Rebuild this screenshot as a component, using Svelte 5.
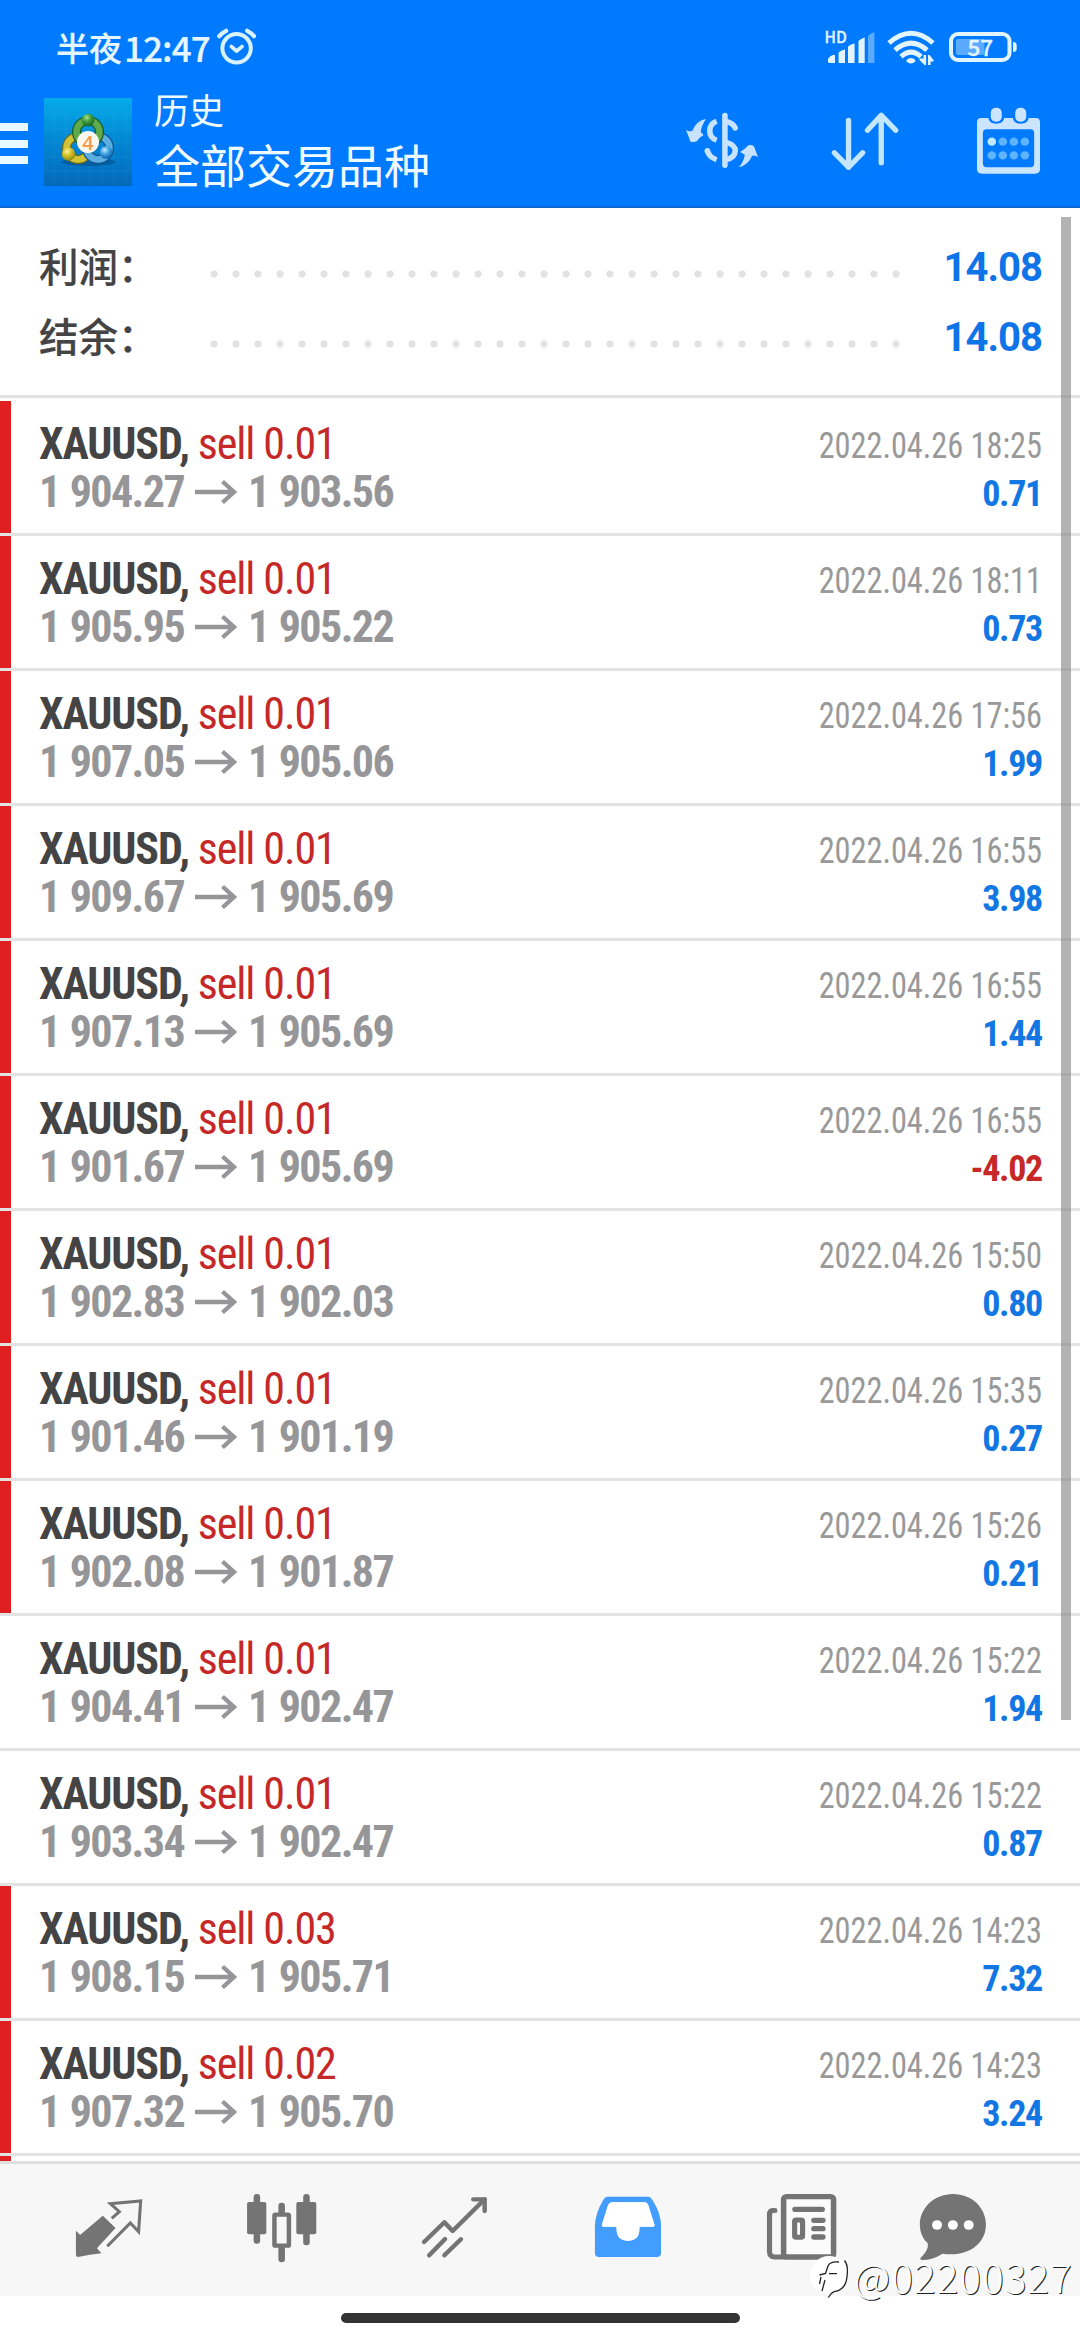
<script lang="ts">
  type Deal = {
    lots: string;
    open: string;
    close: string;
    time: string;
    profit: string;
    marked: boolean;
  };

  function deal(lots: string, open: string, close: string, time: string, profit: string, marked = true): Deal {
    return { lots, open: `1 ${open}`, close: `1 ${close}`, time: `2022.04.26 ${time}`, profit, marked };
  }

  const summary = [
    { label: '利润：', value: '14.08' },
    { label: '结余：', value: '14.08' }
  ];

  const deals: Deal[] = [
    deal('0.01', '904.27', '903.56', '18:25', '0.71'),
    deal('0.01', '905.95', '905.22', '18:11', '0.73'),
    deal('0.01', '907.05', '905.06', '17:56', '1.99'),
    deal('0.01', '909.67', '905.69', '16:55', '3.98'),
    deal('0.01', '907.13', '905.69', '16:55', '1.44'),
    deal('0.01', '901.67', '905.69', '16:55', '-4.02'),
    deal('0.01', '902.83', '902.03', '15:50', '0.80'),
    deal('0.01', '901.46', '901.19', '15:35', '0.27'),
    deal('0.01', '902.08', '901.87', '15:26', '0.21'),
    deal('0.01', '904.41', '902.47', '15:22', '1.94', false),
    deal('0.01', '903.34', '902.47', '15:22', '0.87', false),
    deal('0.03', '908.15', '905.71', '14:23', '7.32'),
    deal('0.02', '907.32', '905.70', '14:23', '3.24')
  ];
</script>

<div class="app">
  <header>
    <div class="status">
      <span class="clock">半夜<b>12:47</b></span>
      <svg class="alarm" viewBox="215 26 44 44">
        <g fill="none" stroke="#d9f2ff" stroke-linecap="round" stroke-linejoin="round">
          <circle cx="236.6" cy="48.3" r="14.2" stroke-width="4" />
          <path d="M231.4 46.6l5.2 4.4 5.4-4.4" stroke-width="3.8" />
          <path d="M219.3 36.2q2.8-3.4 6.8-5.4M254 36.2q-2.8-3.4-6.8-5.4" stroke-width="4.2" />
        </g>
      </svg>
      <svg class="system" viewBox="820 24 200 48" fill="#e2f5ff">
        <text x="824.5" y="43" class="hd">HD</text>
        <path d="M828 62v-3q2-3.500 5-4h2v8h-6zM838.600 63V52.500q3-2.500 6.400-3V63zM848 63V46.500q3-2.500 6.600-3V63zM858.500 63V41q3-3 6.200-3.500V63z" />
        <path d="M868 63V36q3-3 6.400-3.700V63z" opacity=".4" />
        <g fill="none" stroke="#e2f5ff" stroke-width="5">
          <path d="M889 43q22-19.500 44 0" />
          <path d="M895 50.200q16-14 32 0" />
          <path d="M901 56.700q10-9 20 0" />
        </g>
        <path d="M906.500 60q4.400-4 8.800 0v1.500q-4.400 4-8.800 0zM923.500 55h2.600v10h-1.600l-5-5v-1.500h4zM928 65V55h1.600l4 5v1.500h-3V65z" />
        <rect x="951" y="34" width="58.500" height="26" rx="7" fill="none" stroke="#e2f5ff" stroke-width="4" />
        <rect x="956" y="39" width="28.500" height="16" rx="2" opacity=".4" />
        <path d="M1013 42q3.700 0 3.700 3v4q0 3-3.700 3z" />
        <text x="967.500" y="56" class="charge">57</text>
      </svg>
    </div>

    <div class="toolbar">
      <div class="menu"><i></i><i></i><i></i></div>
      <svg class="logo" viewBox="0 0 88 88">
        <defs>
          <linearGradient id="sky" x1="0" y1="0" x2="0" y2="1">
            <stop offset="0" stop-color="#05abea" />
            <stop offset=".5" stop-color="#0386d3" />
            <stop offset="1" stop-color="#0468b8" />
          </linearGradient>
          <radialGradient id="green" cx=".4" cy=".3" r=".7">
            <stop offset="0" stop-color="#a8e08c" />
            <stop offset=".5" stop-color="#3f9a3b" />
            <stop offset="1" stop-color="#17682a" />
          </radialGradient>
          <radialGradient id="gold" cx=".4" cy=".3" r=".7">
            <stop offset="0" stop-color="#fff29a" />
            <stop offset=".5" stop-color="#d3be25" />
            <stop offset="1" stop-color="#8b8a10" />
          </radialGradient>
          <radialGradient id="azure" cx=".4" cy=".3" r=".7">
            <stop offset="0" stop-color="#bfe8ff" />
            <stop offset=".5" stop-color="#3f9fde" />
            <stop offset="1" stop-color="#0f63ac" />
          </radialGradient>
        </defs>
        <rect width="88" height="88" fill="url(#sky)" />
        <path d="M10 0V88M22 0V88M34 0V88M46 0V88M58 0V88M70 0V88M82 0V88M0 17H88M0 31H88M0 45H88M0 59H88M0 73H88" stroke="#5ec8ee" stroke-opacity=".14" stroke-width=".8" />
        <ellipse cx="44.500" cy="64" rx="27" ry="4" fill="#033f75" opacity=".45" />
        <g fill="none">
          <circle cx="34" cy="50" r="11.500" stroke="#6f6c14" stroke-width="9" />
          <circle cx="34" cy="50" r="11.500" stroke="#d2c236" stroke-width="6.500" />
          <circle cx="54" cy="50" r="11.500" stroke="#0f548f" stroke-width="9" />
          <circle cx="54" cy="50" r="11.500" stroke="#5aaee2" stroke-width="6.500" />
          <circle cx="44" cy="34" r="11.500" stroke="#185c27" stroke-width="9" />
          <circle cx="44" cy="34" r="11.500" stroke="#5fab49" stroke-width="6.500" />
        </g>
        <circle cx="44" cy="22" r="6.300" fill="url(#green)" />
        <circle cx="24.500" cy="56" r="6.700" fill="url(#gold)" />
        <circle cx="62" cy="54.500" r="6.300" fill="url(#azure)" />
        <circle cx="44" cy="44" r="11" fill="#fbf7ef" />
        <text x="44" y="51.500" class="four">4</text>
      </svg>
      <div class="titles">
        <span class="sub">历史</span>
        <span class="main">全部交易品种</span>
      </div>
      <div class="actions">
        <svg viewBox="418.200 318 220.700 210" preserveAspectRatio="none">
          <g fill="none" stroke="#c8e3ff" stroke-width="16">
            <path d="M537 346V496" stroke-linecap="round" />
            <path d="M513 364Q493 372 493 393Q493 414 513 421" />
            <path d="M541 364Q562 370 567 384" stroke-linecap="round" />
            <path d="M486 452Q491 472 513 479" />
            <path d="M486 452v1" stroke-linecap="round" />
            <path d="M541 427Q568 436 567 453Q566 472 541 479" />
          </g>
          <path d="M482 357Q468 378 467 396L475 405Q464 411 456 423Q448 427 437 425Q432 410 424 390Q433 396 442 393Q454 362 482 357zM577 502Q590 489 595 464L581 456Q594 449 605 436Q612 434 621 438Q626 452 633 471Q625 465 616 467Q606 494 577 502z" fill="#c8e3ff" />
        </svg>
        <svg viewBox="836.400 318 220.700 210" preserveAspectRatio="none">
          <path d="M896 361V502M855 458L896 502L937 458M991 488V346M951 391L991 346L1033 391" fill="none" stroke="#c5e6ff" stroke-width="15.500" stroke-linecap="round" stroke-linejoin="round" />
        </svg>
        <svg viewBox="1254.500 318 220.700 210" preserveAspectRatio="none">
          <path fill-rule="evenodd" d="M1282 354H1302Q1304 371 1325 371Q1346 371 1348 354H1373Q1375 371 1396 371Q1417 371 1419 354H1440Q1452 354 1452 367V507Q1452 521 1438 521H1283Q1269 521 1269 507V367Q1269 354 1282 354zM1297 388Q1286 388 1286 400V490Q1286 502 1297 502H1424Q1435 502 1435 490V400Q1435 388 1424 388z" fill="#cbe4ff" />
          <rect x="1309" y="323" width="32" height="42" rx="15" fill="#cbe4ff" />
          <rect x="1380" y="323" width="32" height="42" rx="15" fill="#cbe4ff" />
          <circle cx="1312" cy="425" r="12.500" fill="#c0ebff" />
          {#each [1344, 1376, 1408] as cx}
            <circle {cx} cy="425" r="12.500" fill="#5eb4ff" />
          {/each}
          {#each [1312, 1344, 1376, 1408] as cx}
            <circle {cx} cy="466" r="12.500" fill="#5eb4ff" />
          {/each}
        </svg>
      </div>
    </div>
  </header>

  <main>
    <section class="summary">
      {#each summary as row}
        <div class="total">
          <span class="label">{row.label}</span>
          <span class="dots"></span>
          <span class="value">{row.value}</span>
        </div>
      {/each}
    </section>

    <ul>
      {#each deals as d}
        <li class:marked={d.marked}>
          <div class="left">
            <div class="line"><strong>XAUUSD,</strong> <span class="sell">sell {d.lots}</span></div>
            <div class="price">
              <span>{d.open}</span>
              <svg viewBox="0 0 42 26"><path d="M0 13H38M27.500 2.500L39 13L27.500 23.500" /></svg>
              <span>{d.close}</span>
            </div>
          </div>
          <div class="right">
            <div class="time">{d.time}</div>
            <div class="profit" class:loss={d.profit.startsWith('-')}>{d.profit}</div>
          </div>
        </li>
      {/each}
      <li class="marked"></li>
    </ul>
    <div class="scrollbar"></div>
  </main>

  <nav>
    <span class="tab">
      <svg viewBox="198.900 264 232.300 240" preserveAspectRatio="none">
        <path d="M323 355L345 335L319 311L407 303L401 395L377 369L310 439" fill="none" stroke="#747474" stroke-width="9" />
        <path d="M297 347L334 384L280 445L293 460Q260 464 225 471Q219 470 219 464V392L231 405z" fill="#747474" />
      </svg>
    </span>
    <span class="tab">
      <svg viewBox="701.300 264 232.300 240" preserveAspectRatio="none" fill="#747474">
        <rect x="716" y="306" width="56" height="97" rx="6" />
        <rect x="735" y="282" width="19" height="149" rx="9" />
        <rect x="859" y="306" width="58" height="97" rx="6" />
        <rect x="879" y="282" width="19" height="154" rx="9" />
        <rect x="807" y="308" width="19" height="40" rx="9" />
        <rect x="807" y="435" width="19" height="52" rx="9" />
        <rect x="795.500" y="344" width="42" height="93" rx="3" fill="#f7f7f7" stroke="#747474" stroke-width="13" />
      </svg>
    </span>
    <span class="tab">
      <svg viewBox="1203.700 264 232.300 240" preserveAspectRatio="none">
        <path d="M1230 426L1289 367L1313 393L1406 298M1245 466L1291 417M1289 466L1337 418" fill="none" stroke="#747474" stroke-width="13" stroke-linecap="round" stroke-linejoin="round" />
        <path d="M1373 298H1406V333" fill="none" stroke="#747474" stroke-width="13" stroke-linecap="round" stroke-linejoin="round" />
      </svg>
    </span>
    <span class="tab">
      <svg viewBox="137.900 264 232.300 240" preserveAspectRatio="none">
        <path fill-rule="evenodd" d="M194 290H313Q320 290 325 300Q350 340 350 378V459Q350 471 338 471H170Q158 471 158 459V378Q159 340 182 300Q187 290 194 290zM207 307Q200 307 196 316L178 375Q177 380 184 380H219Q222 380 221 388Q221 422 254 422Q287 422 287 388Q286 380 289 380H326Q332 380 331 375L313 316Q310 307 303 307z" fill="#429dff" />
        <path d="M184 380H219Q222 380 221 388Q221 422 254 422Q287 422 287 388Q286 380 289 380H326Q332 380 331 375L313 316Q310 307 303 307H207Q200 307 196 316L178 375Q177 380 184 380z" fill="#fff" />
      </svg>
    </span>
    <span class="tab">
      <svg viewBox="640.300 264 232.300 240" preserveAspectRatio="none" fill="none" stroke="#747474">
        <path d="M678 331Q665 331 665 344V454Q665 471 680 471H712" stroke-width="15" />
        <path d="M681 331v1" stroke-width="14" stroke-linecap="round" />
        <rect x="706" y="290" width="145" height="181" rx="8" fill="#fbfbfb" stroke-width="16" />
        <path d="M739 328H818M794 361H820M794 386H820M794 411H820" stroke-width="16" stroke-linecap="round" />
        <rect x="738" y="360" width="23" height="52" rx="4" stroke-width="15" />
      </svg>
    </span>
    <span class="tab">
      <svg viewBox="1083.200 264 232.300 240" preserveAspectRatio="none">
        <path d="M1199 282C1255 282 1295 324 1295 374C1295 430 1243 473 1169 461Q1140 480 1111 480Q1103 480 1105 474Q1130 450 1126 430Q1103 408 1103 374C1103 324 1145 282 1199 282z" fill="#747474" />
        <circle cx="1153" cy="375" r="14.500" fill="#fff" />
        <circle cx="1199" cy="375" r="14.500" fill="#fff" />
        <circle cx="1245" cy="375" r="14.500" fill="#fff" />
      </svg>
    </span>
  </nav>

  <footer><span class="home"></span></footer>

  <div class="watermark">
    <svg viewBox="0 0 42 46">
      <circle cx="19" cy="19" r="19" fill="#fff" />
      <path d="M29 6Q20 5 18 10L15.500 17.500L9.500 19M11 21L9.500 28M12 35L15 24M19 17.700H27M34.500 4.500Q38 9 37.300 17Q37 26 34 30Q30 35 24 35.700Q21 37 18.300 41.500" fill="none" stroke="#222" stroke-width="1.300" />
    </svg>
    <span>@02200327</span>
  </div>
</div>

<style>
  :global(body) {
    background: #fff;
  }

  .app {
    position: relative;
    display: flex;
    flex-direction: column;
    width: 1080px;
    height: 2340px;
    overflow: hidden;
    background: #fff;
    font-family: Roboto, 'Noto Sans CJK SC', sans-serif;
  }

  svg {
    display: block;
    flex: none;
  }

  header {
    box-sizing: border-box;
    height: 208px;
    background: #007aff;
    border-bottom: 2px solid #0d67cd;
  }

  .status {
    display: flex;
    align-items: center;
    box-sizing: border-box;
    height: 80px;
    padding: 16px 60px 0 56px;
  }

  .clock {
    display: flex;
    align-items: center;
    width: 155px;
    padding-bottom: 3px;
    font: 500 33px/40px 'Noto Sans CJK SC', sans-serif;
    color: #e6f6ff;
    white-space: nowrap;
    -webkit-text-stroke: 0.2px #e6f6ff;
  }

  .clock b {
    margin-left: 2px;
    font-size: 35px;
    font-weight: 500;
    letter-spacing: -0.9px;
  }

  .alarm {
    width: 44px;
    height: 44px;
    margin-left: 4px;
  }

  .system {
    width: 200px;
    height: 48px;
    margin-left: auto;
  }

  .hd {
    font: 500 15.5px 'Noto Sans CJK SC', sans-serif;
    stroke: #e2f5ff;
    stroke-width: 0.3px;
  }

  .charge {
    font: 500 22.5px 'Noto Sans CJK SC', sans-serif;
    stroke: #e2f5ff;
    stroke-width: 0.3px;
  }

  .toolbar {
    display: flex;
    align-items: flex-start;
    padding-right: 32px;
  }

  .menu {
    display: grid;
    gap: 8.5px;
    width: 27.5px;
    margin-top: 43px;
  }

  .menu i {
    height: 8px;
    background: #e8faff;
  }

  .logo {
    width: 88px;
    height: 88px;
    margin: 18px 0 0 16.5px;
  }

  .four {
    font: 600 20px 'Open Sans', sans-serif;
    fill: #f39a4e;
    text-anchor: middle;
  }

  .titles {
    display: flex;
    flex-direction: column;
    margin: 7px 0 0 22px;
    color: #f0fbff;
    font-family: 'Noto Sans CJK SC', sans-serif;
  }

  .sub {
    font-size: 35px;
    line-height: 44px;
  }

  .main {
    font-size: 46px;
    line-height: 64px;
  }

  .actions {
    display: flex;
    gap: 68px;
    margin: 26px 0 0 auto;
  }

  .actions svg {
    width: 76px;
    height: 70px;
  }

  main {
    position: relative;
    height: 1953px;
    overflow: hidden;
  }

  .summary {
    box-sizing: border-box;
    height: 190px;
    padding: 24px 38px 0 39px;
    border-bottom: 3px solid #e3e3e3;
  }

  .total {
    display: flex;
    align-items: center;
    height: 70px;
  }

  .label {
    width: 160px;
    padding-bottom: 5px;
    font: 500 39.5px/65px 'Noto Sans CJK SC', sans-serif;
    color: #444;
    -webkit-text-stroke: 0.2px #444;
  }

  .dots {
    width: 704px;
    height: 8px;
    margin: 14px 0 0 3.5px;
    background: radial-gradient(circle at 11px 4px, #e2e2e2 3.2px, transparent 4px) 0 0 / 22px 8px;
  }

  .value {
    margin-left: auto;
    font-size: 40px;
    font-weight: 700;
    letter-spacing: -1px;
    color: #0f74e8;
  }

  ul {
    margin: 3px 0 0;
    padding: 0;
    list-style: none;
  }

  li {
    display: flex;
    justify-content: space-between;
    box-sizing: border-box;
    height: 135px;
    padding: 18.5px 38px 0 39px;
    border-bottom: 3px solid #e3e3e3;
    font-family: 'Roboto Condensed', Roboto, sans-serif;
    font-stretch: 75%;
    white-space: nowrap;
  }

  li.marked {
    background: linear-gradient(#e02020, #e02020) 0 0 / 11px 100% no-repeat padding-box;
  }

  .line,
  .price {
    font-size: 44px;
    line-height: 48px;
    letter-spacing: -1.1px;
  }

  .line strong {
    color: #444;
  }

  .sell {
    color: #c62828;
  }

  .price {
    display: flex;
    align-items: center;
    font-weight: 700;
    letter-spacing: -1.6px;
    word-spacing: 1.5px;
    color: #969699;
  }

  .price svg {
    width: 42px;
    height: 26px;
    margin: 0 11px;
  }

  .price path {
    fill: none;
    stroke: #969699;
    stroke-width: 4.3;
  }

  .right {
    padding-top: 2.5px;
    text-align: right;
  }

  .time,
  .profit {
    font-size: 36px;
    line-height: 48px;
    color: #999;
  }

  /* timestamps are set tighter than the condensed face allows */
  .time {
    transform: scaleX(0.897);
    transform-origin: right;
  }

  .profit {
    font-weight: 700;
    letter-spacing: -1.3px;
    color: #1277e3;
  }

  .profit.loss {
    color: #c62828;
  }

  .scrollbar {
    position: absolute;
    top: 9px;
    right: 9px;
    width: 10px;
    height: 1503px;
    background: rgba(128, 128, 128, 0.6);
  }

  nav {
    display: flex;
    box-sizing: border-box;
    height: 135px;
    padding: 24px 0 0 22px;
    border-top: 3px solid #e0e0e0;
    background: #f7f7f7;
  }

  .tab {
    display: flex;
    justify-content: center;
    width: 173px;
  }

  .tab:last-child {
    width: 132px;
  }

  .tab svg {
    width: 80px;
    height: 80px;
  }

  footer {
    display: flex;
    justify-content: center;
    padding-top: 17px;
  }

  .home {
    width: 399px;
    height: 10px;
    border-radius: 5px;
    background: #333;
  }

  .watermark {
    position: absolute;
    right: 7px;
    bottom: 33px;
    display: flex;
    align-items: center;
    gap: 2px;
    font: 300 40px/50px 'Noto Sans CJK SC', sans-serif;
    letter-spacing: 1.3px;
    color: #fff;
    text-shadow: 1px 1px 0 #222;
  }

  .watermark span {
    padding-bottom: 6px;
  }

  .watermark svg {
    width: 42px;
    height: 46px;
  }
</style>
